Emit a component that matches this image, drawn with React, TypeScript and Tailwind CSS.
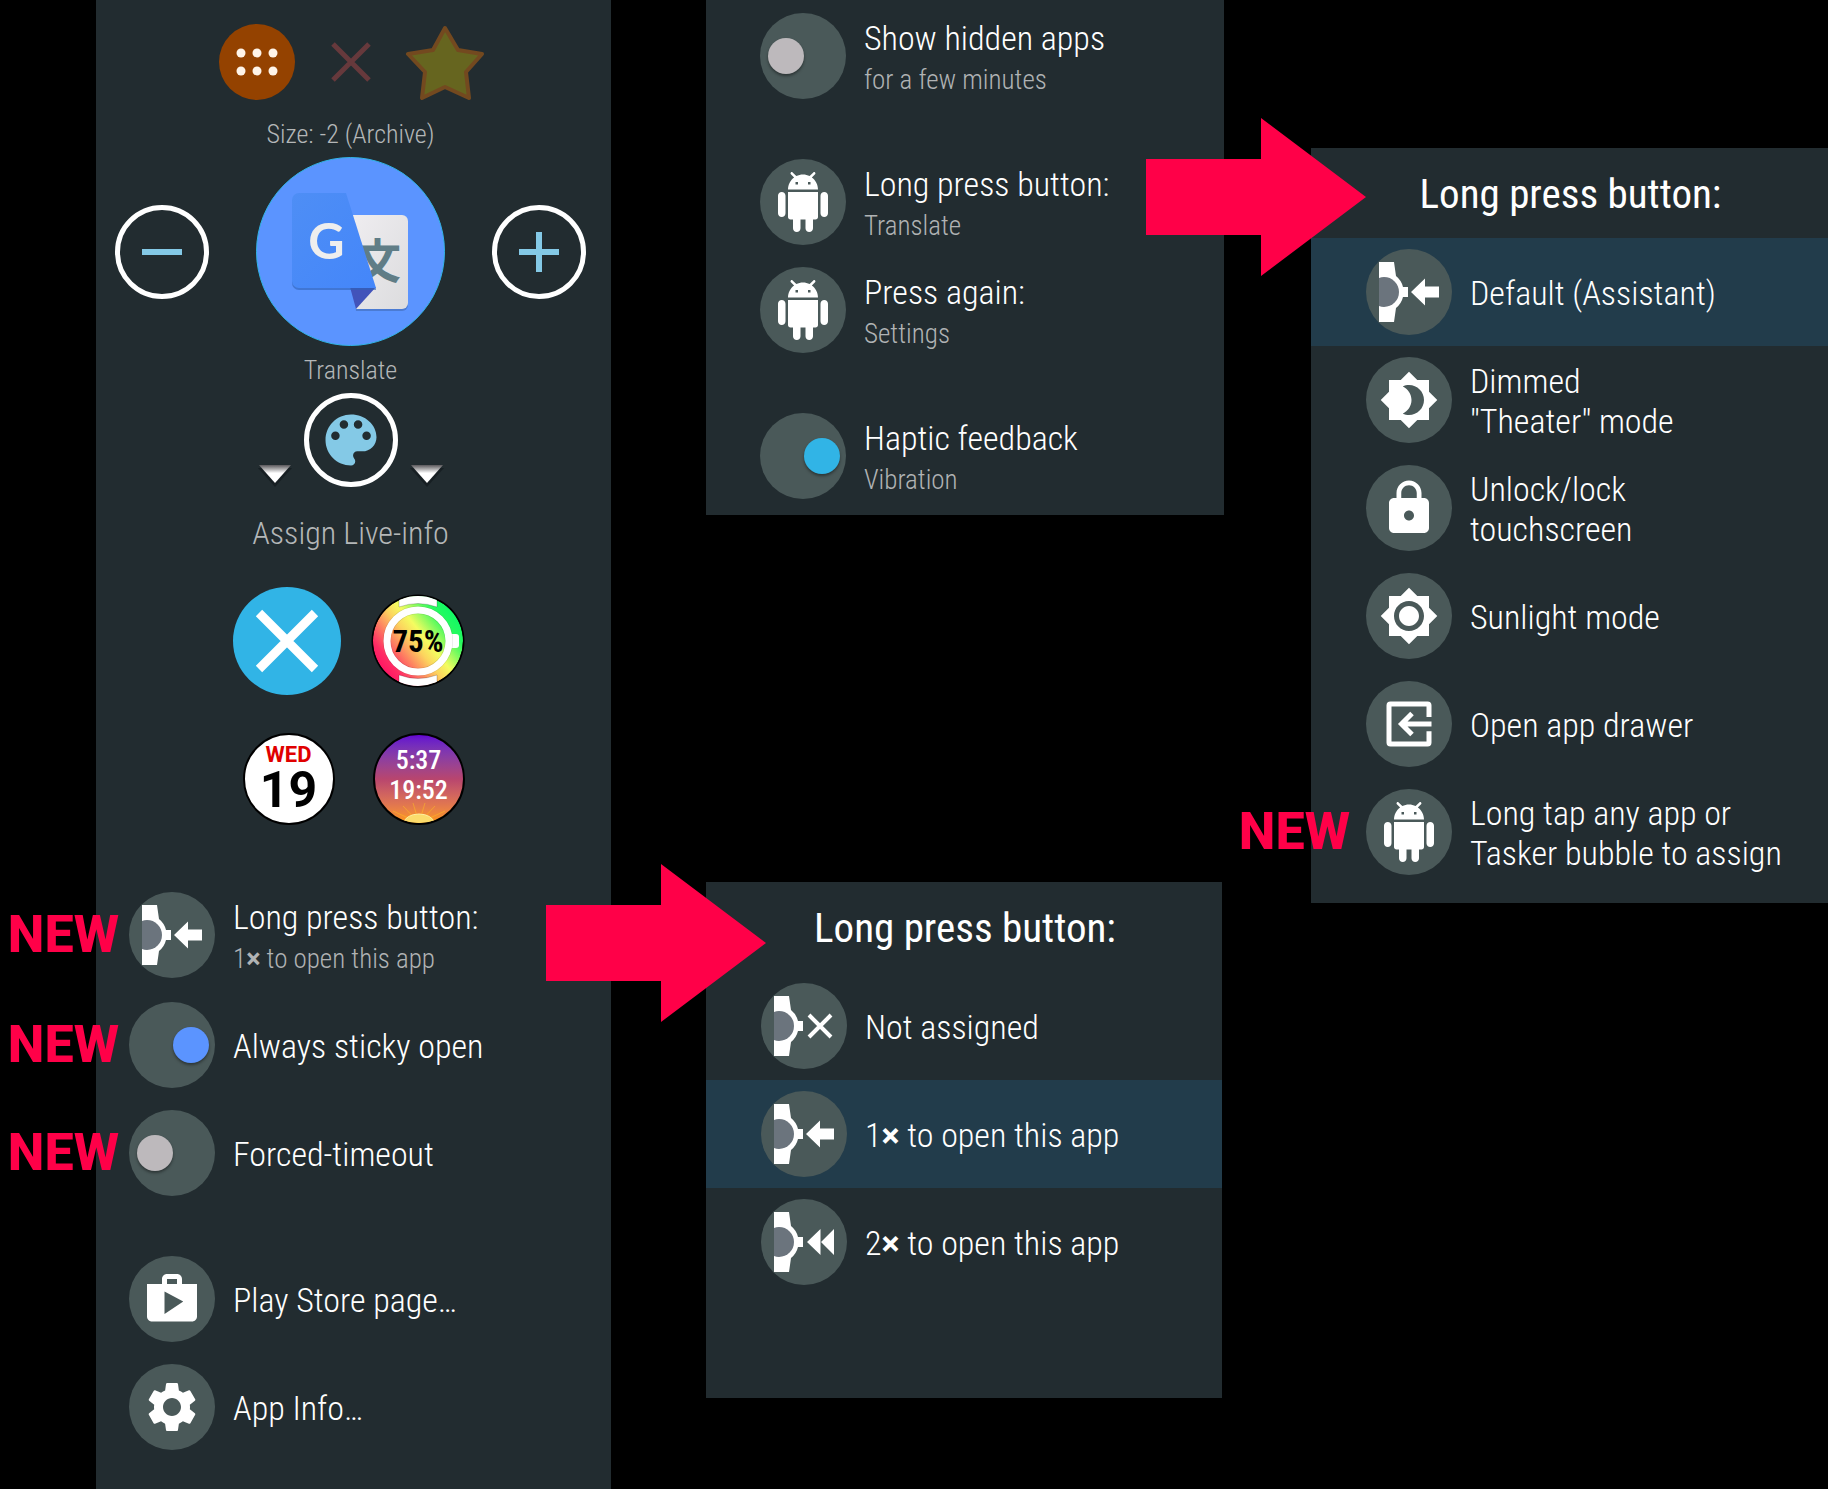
import React, { useState } from 'react'
import {
  MdShop,
  MdSettings,
  MdLock,
  MdBrightness4,
  MdBrightness7,
} from 'react-icons/md'


// ---------- icons ----------

const AndroidIcon = () => (
  <svg viewBox="0 0 24 24" className="size-[60px]" fill="currentColor">
    <path d="M6 18c0 .55.45 1 1 1h1v3.5c0 .83.67 1.5 1.5 1.5s1.5-.67 1.5-1.5V19h2v3.5c0 .83.67 1.5 1.5 1.5s1.5-.67 1.5-1.5V19h1c.55 0 1-.45 1-1V8H6v10zM3.5 8C2.67 8 2 8.67 2 9.5v7c0 .83.67 1.5 1.5 1.5S5 17.33 5 16.5v-7C5 8.67 4.33 8 3.5 8zm17 0c-.83 0-1.5.67-1.5 1.5v7c0 .83.67 1.5 1.5 1.5s1.5-.67 1.5-1.5v-7c0-.83-.67-1.5-1.5-1.5zm-4.97-5.84l1.3-1.3c.2-.2.2-.51 0-.71-.2-.2-.51-.2-.71 0l-1.48 1.48C13.85 1.23 12.95 1 12 1c-.96 0-1.86.23-2.66.63L7.85.15c-.2-.2-.51-.2-.71 0-.2.2-.2.51 0 .71l1.31 1.31C6.97 3.26 6 5.01 6 7h12c0-1.99-.97-3.75-2.47-4.84zM10 5H9V4h1v1zm5 0h-1V4h1v1z" />
  </svg>
)

const PaletteIcon = () => (
  <svg viewBox="0 0 24 24" className="size-[68px] shrink-0" fill="currentColor">
    <path d="M12 3c-4.97 0-9 4.03-9 9s4.03 9 9 9c.83 0 1.5-.67 1.5-1.5 0-.39-.15-.74-.39-1.01-.23-.26-.38-.61-.38-.99 0-.83.67-1.5 1.5-1.5H16c2.76 0 5-2.24 5-5 0-4.42-4.03-8-9-8zm-5.5 9c-.83 0-1.5-.67-1.5-1.5S5.67 9 6.5 9 8 9.67 8 10.5 7.33 12 6.5 12zm3-4C8.67 8 8 7.33 8 6.5S8.67 5 9.5 5s1.5.67 1.5 1.5S10.33 8 9.5 8zm5 0c-.83 0-1.5-.67-1.5-1.5S13.67 5 14.5 5s1.5.67 1.5 1.5S15.33 8 14.5 8zm3 4c-.83 0-1.5-.67-1.5-1.5S16.67 9 17.5 9s1.5.67 1.5 1.5-.67 1.5-1.5 1.5z" />
  </svg>
)

const DrawerIcon = () => (
  <svg viewBox="0 0 24 24" className="size-[60px]" fill="none" stroke="currentColor" strokeWidth="2">
    <path d="M20 9.2V4.600a.6.6 0 0 0-.6-.6H4.600a.6.6 0 0 0-.6.6v14.800a.6.6 0 0 0 .6.6h14.800a.6.6 0 0 0 .6-.6v-4.500" />
    <path d="M21 12H9.500M13.200 7.800L9 12l4.200 4.200" />
  </svg>
)

// half a watch with its crown, the mark on the right tells the action
const WatchIcon = ({ mark }: { mark: 'arrow' | 'cross' | 'double' }) => (
  <svg viewBox="0 0 86 86" className="size-[86px]">
    <path d="M13 13H28L30 27A20 20 0 0 1 37 38H42V48H37A20 20 0 0 1 30 59L28 73H13Z" fill="#fff" />
    <path d="M13 29A15 15 0 0 1 18 28A15 15 0 0 1 18 58A15 15 0 0 1 13 57Z" fill="#6b747d" />
    {mark === 'arrow' && <path d="M45 43L59 29.500V37.500H73V48.500H59V56.500Z" fill="#fff" />}
    {mark === 'cross' && <path d="M48 32L70 54M70 32L48 54" stroke="#fff" strokeWidth="4" />}
    {mark === 'double' && <path d="M46 43L59.500 30V56ZM60 43L73 30V56Z" fill="#fff" />}
  </svg>
)

const BigArrow = ({ className }: { className: string }) => (
  <svg viewBox="0 0 220 158" className={`absolute z-10 w-[220px] h-[158px] ${className}`}>
    <path d="M0 41H115V0L220 79L115 158V117H0Z" fill="#ff0048" />
  </svg>
)

const TranslateLogo = () => (
  <svg viewBox="0 0 189 189" className="size-[189px]">
    <defs>
      <linearGradient id="card" x1="0" y1="0" x2="1" y2="1">
        <stop offset="0" stopColor="#4e8ef5" />
        <stop offset="1" stopColor="#4486fa" />
      </linearGradient>
      <linearGradient id="paper" x1="0" y1="0" x2="1" y2="1">
        <stop offset="0" stopColor="#efedf0" />
        <stop offset="1" stopColor="#dcdcde" />
      </linearGradient>
    </defs>
    <circle cx="94.500" cy="94.500" r="94" fill="#5b94ff" stroke="#31b4e6" />
    <path d="M96 59H146a6 6 0 0 1 6 6V148a6 6 0 0 1-6 6H100Z" fill="#3b62a8" opacity=".5" />
    <path d="M96 58H146a6 6 0 0 1 6 6V146a6 6 0 0 1-6 6H100Z" fill="url(#paper)" />
    <text x="98" y="121" fontSize="47" fontWeight="700" fill="#607d86" fontFamily="'Noto Sans CJK JP', sans-serif">文</text>
    <path d="M94 130H120L100 152Z" fill="#4253ba" />
    <path d="M36 44V126a7 7 0 0 0 7 7H120V131H43Z" fill="#2f63b8" opacity=".6" />
    <path d="M43 36H90L120 131H43a7 7 0 0 1-7-7V43a7 7 0 0 1 7-7Z" fill="url(#card)" />
    <text x="70.500" y="102" textAnchor="middle" fontSize="50" fontWeight="700" fill="#eee" fontFamily="Lato, sans-serif">G</text>
  </svg>
)


// ---------- live info bubbles ----------

const BatteryBubble = () => (
  <svg viewBox="0 0 94 94" className="size-[94px]">
    <defs>
      <linearGradient id="charge" x1="0.1" y1="0.82" x2="0.9" y2="0.18">
        <stop offset="0" stopColor="#ff1464" />
        <stop offset=".12" stopColor="#ff2c64" />
        <stop offset=".45" stopColor="#fcd45e" />
        <stop offset=".58" stopColor="#f4fc60" />
        <stop offset=".85" stopColor="#28fa5e" />
        <stop offset="1" stopColor="#10fa66" />
      </linearGradient>
      <clipPath id="dial">
        <circle cx="47" cy="47" r="45" />
      </clipPath>
    </defs>
    <circle cx="47" cy="47" r="46.500" fill="#000" />
    <g clipPath="url(#dial)">
      <circle cx="47" cy="47" r="45" fill="url(#charge)" />
      <path d="M28 0H66V13Q47 6 28 13ZM28 94H66V81Q47 88 28 81Z" fill="#fff" stroke="#0003" />
      <rect x="76" y="40" width="12" height="14" rx="3" fill="#fff" />
      <circle cx="47" cy="47" r="31" fill="none" stroke="#0002" strokeWidth="8" />
      <circle cx="47" cy="47" r="31" fill="none" stroke="#fff" strokeWidth="7" />
    </g>
    <text x="47" y="58" textAnchor="middle" fontSize="31" fontWeight="700">75%</text>
  </svg>
)

const DateBubble = () => (
  <span className="flex flex-col items-center size-[92px] rounded-full border-2 border-black bg-white pt-2.5 font-['Roboto',sans-serif] font-bold">
    <span className="text-[22px] leading-5 text-[#e00000]">WED</span>
    <span className="text-[50px] leading-[50px] text-black">19</span>
  </span>
)

const SunBubble = () => (
  <span className="relative flex flex-col items-center size-[92px] overflow-hidden rounded-full border-2 border-black bg-linear-to-b from-[#6400d2] via-[#b8456e] to-[#ff9800] pt-2.5 font-medium text-white">
    <span className="text-[26px] leading-[30px]">5:37</span>
    <span className="text-[26px] leading-[30px]">19:52</span>
    <svg viewBox="0 0 88 20" className="absolute bottom-0 w-[88px] h-5">
      <path d="M44 20L18 8M44 20L28 3M44 20L38 0M44 20L50 0M44 20L60 3M44 20L70 8" stroke="#ffc020" opacity=".5" />
      <ellipse cx="44" cy="20" rx="15" ry="9" fill="#fbdc6c" stroke="#fdf0a0" />
    </svg>
  </span>
)


// ---------- rows ----------

const NewTag = ({ className = 'mr-2.5' }: { className?: string }) => (
  <span className={`absolute right-full top-1/2 -translate-y-1/2 font-['Roboto',sans-serif] text-[52px] leading-none font-extrabold text-[#ff0048] ${className}`}>
    NEW
  </span>
)

// the digit stays light, only the times sign is heavier
const Label = ({ text }: { text: string }) => (
  <>
    {text.split('×').map((part, i) => (
      <React.Fragment key={i}>
        {i > 0 && <b className="font-['Roboto',sans-serif] font-bold">×</b>}
        {part}
      </React.Fragment>
    ))}
  </>
)

const RowText = ({ title, sub }: { title: string; sub?: string }) => (
  <span className={`block text-left ${sub ? 'pt-1' : 'pt-0.5'}`}>
    <span className="block whitespace-pre-line text-[34px] leading-10 text-white"><Label text={title} /></span>
    {sub && <span className="block mt-1 text-[27px] leading-9 text-[#b0b3b4]"><Label text={sub} /></span>}
  </span>
)

interface RowProps {
  icon: React.ReactNode
  title: string
  sub?: string
  tag?: React.ReactNode
  selected?: boolean
  onClick?: () => void
  className?: string
}

const Row = ({ icon, title, sub, tag, selected, onClick, className = 'pl-[54px]' }: RowProps) => (
  <button
    type="button"
    onClick={onClick}
    className={`flex w-full h-[108px] items-center gap-[18px] ${selected ? 'bg-[#223c4b]' : ''} ${className}`}
  >
    <span className="relative flex size-[86px] shrink-0 items-center justify-center rounded-full bg-[#4a5959] text-white">
      {icon}
      {tag}
    </span>
    <RowText title={title} sub={sub} />
  </button>
)

interface ToggleProps {
  title: string
  sub?: string
  on?: boolean
  tag?: React.ReactNode
  color?: string
  className?: string
}

const ToggleRow = ({ title, sub, on = false, tag, color = 'checked:before:bg-[#31b4e6]', className = 'pl-[54px]' }: ToggleProps) => {
  const [checked, setChecked] = useState(on)

  return (
    <label className={`flex w-full h-[108px] items-center gap-[18px] ${className}`}>
      <span className="relative size-[86px] shrink-0">
        <input
          type="checkbox"
          checked={checked}
          onChange={(e) => setChecked(e.target.checked)}
          className={`flex size-[86px] appearance-none items-center rounded-full bg-[#4a5959] pl-2 before:size-9 before:rounded-full before:bg-[#bdb9bc] before:shadow-[0_2px_3px_rgba(0,0,0,0.4)] checked:pl-[44px] ${color}`}
        />
        {tag}
      </span>
      <RowText title={title} sub={sub} />
    </label>
  )
}

const ROUND = 'flex size-[94px] items-center justify-center rounded-full border-5 border-white text-[#84c9e6]'

const assistOptions = [
  { title: 'Default (Assistant)', icon: <WatchIcon mark="arrow" /> },
  { title: 'Dimmed\n"Theater" mode', icon: <MdBrightness4 className="size-[60px]" /> },
  { title: 'Unlock/lock\ntouchscreen', icon: <MdLock className="size-[60px]" /> },
  { title: 'Sunlight mode', icon: <MdBrightness7 className="size-[60px]" /> },
  { title: 'Open app drawer', icon: <DrawerIcon /> },
  { title: 'Long tap any app or\nTasker bubble to assign', icon: <AndroidIcon />, isNew: true },
]

const pressOptions = [
  { title: 'Not assigned', icon: <WatchIcon mark="cross" /> },
  { title: '1× to open this app', icon: <WatchIcon mark="arrow" /> },
  { title: '2× to open this app', icon: <WatchIcon mark="double" /> },
]

const Caret = () => (
  <svg viewBox="0 0 36 24" className="w-9 h-6">
    <defs>
      <linearGradient id="caret" x1="0" y1="0" x2="0" y2="1">
        <stop offset="0" stopColor="#5a585b" />
        <stop offset=".45" stopColor="#fff" />
      </linearGradient>
    </defs>
    <path d="M1 5H35L18 24Z" fill="#10181b" opacity=".6" />
    <path d="M2 2H34L18 20Z" fill="url(#caret)" />
  </svg>
)

const ListTitle = ({ children }: { children: React.ReactNode }) => (
  <h2 className="h-[90px] pt-5 pl-0.5 text-center text-[41px] leading-[52px] font-normal text-white">{children}</h2>
)


const App = () => {
  const [assist, setAssist] = useState(0)
  const [press, setPress] = useState(1)

  return (
    <main className="grid min-h-screen grid-cols-[515fr_95fr_518fr_87fr_517fr] bg-black pl-24 font-['Roboto_Condensed','Liberation_Sans_Narrow',Roboto,sans-serif] font-light">

      {/* App bubble settings */}
      <section className="min-w-0 bg-[#222c30] pt-6 pb-7">
        <div className="flex flex-col items-center pr-1.5 text-[#b4b7b8]">
          <div className="flex h-[76px] items-center gap-3.5">
            <button type="button" aria-label="All apps" className="flex w-20 justify-center">
              <svg viewBox="0 0 76 76" className="size-[76px]">
                <circle cx="38" cy="38" r="38" fill="#944200" />
                <g fill="#fff4e8">
                  <circle cx="22" cy="29" r="4.500" /><circle cx="38" cy="29" r="4.500" /><circle cx="54" cy="29" r="4.500" />
                  <circle cx="22" cy="47" r="4.500" /><circle cx="38" cy="47" r="4.500" /><circle cx="54" cy="47" r="4.500" />
                </g>
              </svg>
            </button>
            <button type="button" aria-label="Remove" className="flex w-20 justify-center">
              <svg viewBox="0 0 40 40" className="size-10">
                <path d="M2 2L38 38M38 2L2 38" stroke="#66393c" strokeWidth="5" />
              </svg>
            </button>
            <button type="button" aria-label="Favorite" className="flex w-20 justify-center">
              <svg viewBox="0 0 80 76" className="w-20 h-[76px]">
                <path d="M40 4L53 26L77 30L61 48L64 74L40 63L17 74L20 48L3 30L28 26Z" fill="#66651f" stroke="#73491f" strokeWidth="4" strokeLinejoin="round" />
              </svg>
            </button>
          </div>

          <p className="pt-3.5 pb-[3px] text-[26px] leading-10">Size: -2 (Archive)</p>

          <div className="flex items-center gap-[47px]">
            <button type="button" aria-label="Smaller" className={ROUND}>
              <svg viewBox="0 0 40 40" className="size-10"><path d="M0 20H40" stroke="currentColor" strokeWidth="6" /></svg>
            </button>
            <TranslateLogo />
            <button type="button" aria-label="Bigger" className={ROUND}>
              <svg viewBox="0 0 40 40" className="size-10"><path d="M0 20H40M20 0V40" stroke="currentColor" strokeWidth="6" /></svg>
            </button>
          </div>

          <p className="pt-1 pb-[3px] text-[26px] leading-10">Translate</p>

          <div className="flex items-end gap-[11px]">
            <Caret />
            <button type="button" aria-label="Color" className={ROUND}>
              <PaletteIcon />
            </button>
            <Caret />
          </div>

          <h2 className="pt-[26px] text-[32px] leading-10">Assign Live-info</h2>
        </div>

        <div className="mt-[34px] flex items-center justify-center gap-[30px] pr-2.5">
          <button type="button" aria-label="None" className="flex size-[108px] items-center justify-center rounded-full bg-[#31b4e6]">
            <svg viewBox="0 0 64 64" className="size-16">
              <path d="M4 4L60 60M60 4L4 60" stroke="#fff" strokeWidth="9" />
            </svg>
          </button>
          <button type="button"><BatteryBubble /></button>
        </div>
        <div className="mt-[38px] flex justify-center gap-[38px]">
          <button type="button"><DateBubble /></button>
          <button type="button"><SunBubble /></button>
        </div>

        <div className="mt-14">
          <div className="relative mb-0.5">
            <Row className="pl-[33px]" icon={<WatchIcon mark="arrow" />} title="Long press button:" sub="1× to open this app" tag={<NewTag />} />
            <BigArrow className="-right-[155px] -top-[17px]" />
          </div>
          <ToggleRow className="pl-[33px]" title="Always sticky open" on color="checked:before:bg-[#5b94ff]" tag={<NewTag />} />
          <ToggleRow className="pl-[33px]" title="Forced-timeout" tag={<NewTag />} />
        </div>

        <div className="mt-[38px]">
          <Row className="pl-[33px]" icon={<MdShop className="size-[60px]" />} title="Play Store page…" />
          <Row className="pl-[33px]" icon={<MdSettings className="size-[60px]" />} title="App Info…" />
        </div>
      </section>

      <div className="col-start-3 min-w-0">
        {/* Global settings */}
        <section className="bg-[#222c30] pt-0.5 pb-[5px]">
          <ToggleRow title="Show hidden apps" sub="for a few minutes" />
          <div className="relative mt-[38px]">
            <Row icon={<AndroidIcon />} title="Long press button:" sub="Translate" />
            <BigArrow className="-right-[142px] -top-[30px]" />
          </div>
          <Row icon={<AndroidIcon />} title="Press again:" sub="Settings" />
          <div className="mt-[38px]">
            <ToggleRow title="Haptic feedback" sub="Vibration" on />
          </div>
        </section>

        {/* Per app long press */}
        <section className="mt-[367px] mr-0.5 bg-[#222c30] pb-[102px]">
          <ListTitle>Long press button:</ListTitle>
          {pressOptions.map((o, i) => (
            <Row key={o.title} className="pl-[55px]" icon={o.icon} title={o.title} selected={press === i} onClick={() => setPress(i)} />
          ))}
        </section>
      </div>

      {/* Global long press */}
      <section className="col-start-5 mt-[148px] min-w-0 self-start bg-[#222c30] pb-[17px]">
        <ListTitle>Long press button:</ListTitle>
        {assistOptions.map((o, i) => (
          <Row
            key={o.title}
            className="pl-[55px]"
            icon={o.icon}
            title={o.title}
            selected={assist === i}
            onClick={() => setAssist(i)}
            tag={o.isNew && <NewTag className="mr-4" />}
          />
        ))}
      </section>

    </main>
  )
}

export default App
